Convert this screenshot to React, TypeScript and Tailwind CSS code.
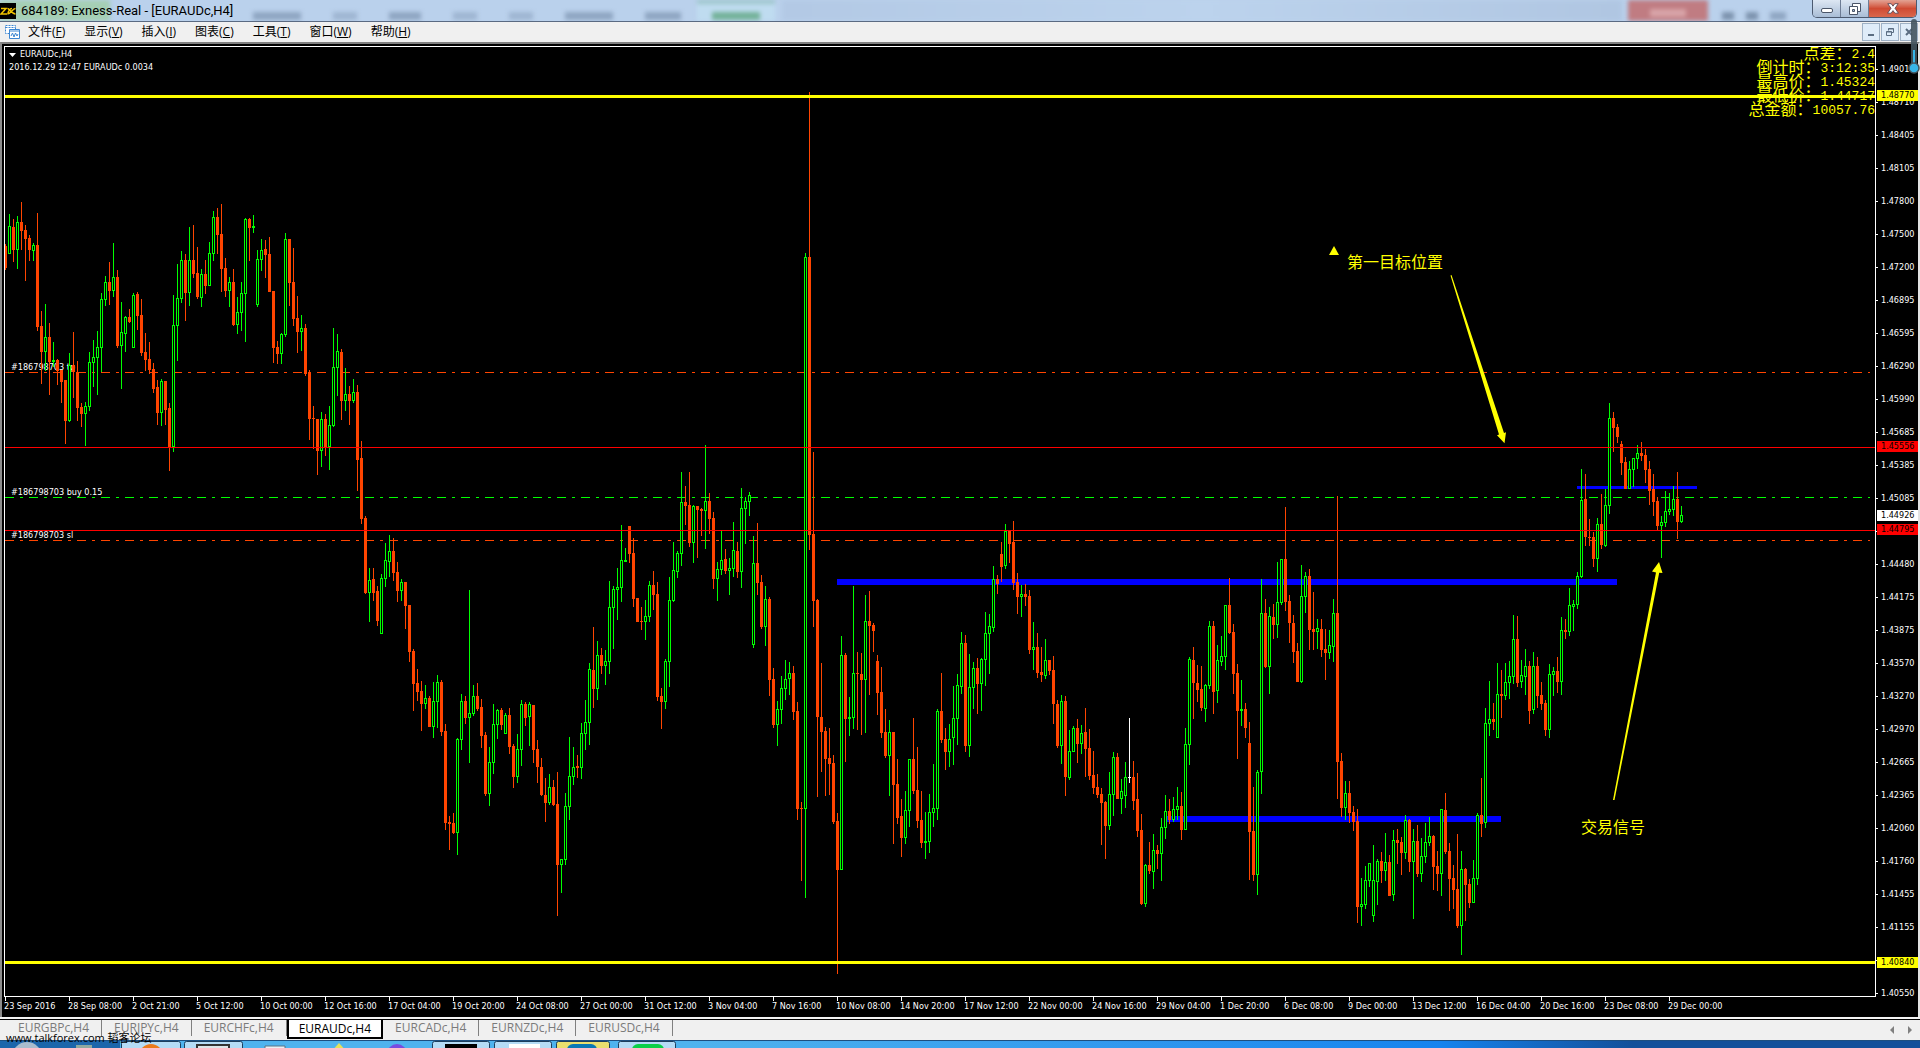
import React from 'react'
import clsx from 'clsx'

const BULL = '#00ff00'
const BEAR = '#ff4500'

// distance between two candles, and where the plot starts in the window
const STEP = 4
const PLOT_LEFT = 5
const PLOT_TOP = 47

// One candle per entry: direction (g up, r down, w flat), then high, body top, body bottom, low
const CANDLES = `
r244 246 268 270,g214 226 254 254,r219 227 250 262,g216 222 250 269,r202 222 231 250,r225 230 239 281,
r235 238 250 261,g243 245 251 261,r213 245 327 331,r311 326 352 384,g304 337 352 371,r323 337 362 395,
g342 360 362 367,r359 360 371 385,r370 370 382 403,r380 380 421 444,g353 365 421 422,r332 365 372 398,
r361 372 408 421,r403 407 414 427,g402 406 414 446,g352 362 407 411,g340 357 363 387,g331 347 358 395,
g293 299 348 372,g276 282 300 306,r262 282 291 305,g243 277 291 297,r270 277 346 348,g302 332 346 389,
g316 317 334 352,r309 317 322 323,g293 295 348 348,r292 294 316 330,r299 315 353 356,r333 352 360 371,
r342 359 370 374,r363 369 389 393,r380 387 413 425,g379 381 413 426,r381 381 410 425,r403 408 448 471,
g295 325 447 452,g264 298 326 361,g251 260 299 303,r254 260 293 321,g227 260 293 306,r225 260 274 278,
r247 273 297 299,g269 274 298 307,r260 274 286 294,g242 253 286 286,g211 217 254 261,r208 217 235 254,
r204 234 269 292,r258 268 291 297,g277 282 291 307,r269 282 325 326,g297 312 325 334,g282 293 313 331,
g218 219 294 342,r218 219 228 261,g215 226 228 233,g250 259 305 307,g239 250 260 271,r240 249 255 278,
r237 254 292 292,r291 291 348 363,r341 347 354 364,g333 334 354 364,g233 239 335 337,r239 239 283 306,
r248 282 319 326,r296 318 332 353,g315 328 332 351,r324 328 374 376,r370 372 419 440,r406 418 419 449,
r419 419 451 475,g412 419 451 467,r414 419 447 456,g406 425 447 470,g328 367 426 427,g334 351 368 396,
r349 352 401 420,g368 394 401 411,r386 394 401 425,g379 392 401 403,r385 392 460 491,r441 458 519 524,
r516 518 593 594,g568 580 593 622,r568 579 593 601,r586 591 621 626,g574 578 634 634,g543 560 579 587,
g535 551 562 577,r538 551 573 581,r562 572 591 602,g579 582 591 601,r582 582 606 629,r605 605 652 662,
r649 651 684 711,r669 683 692 701,r681 691 704 731,g685 698 704 709,r696 698 727 727,g682 701 727 738,
g675 682 702 728,r680 682 732 736,r724 731 823 830,r816 822 824 850,r813 823 833 834,g738 739 833 855,
g694 701 740 750,r696 701 718 724,g590 713 718 763,g685 696 714 716,r683 696 709 711,r699 707 736 748,
r732 735 794 796,g747 762 794 806,g704 724 763 774,g709 710 725 739,r708 710 725 730,g713 715 734 734,
r708 715 747 754,r744 746 777 788,g734 749 777 783,g700 704 750 766,r702 704 718 726,g702 704 717 746,
r705 705 750 763,r740 749 767 783,r758 767 795 796,r778 795 803 822,g774 787 803 805,r780 787 805 806,
r772 804 865 916,g859 859 865 893,g793 806 860 865,g737 776 807 820,g747 767 777 785,r755 766 768 778,
g723 733 768 779,g700 722 734 750,g663 669 723 745,r627 670 689 708,g641 655 689 700,r648 655 666 674,
g650 661 666 685,g581 607 662 674,g586 589 608 649,g568 587 590 620,g525 560 588 602,g548 560 562 562,
r526 526 554 563,r538 553 599 607,r598 598 622 622,r607 621 622 630,g600 616 622 640,g581 585 617 622,
r571 585 595 610,r582 594 697 701,r688 696 702 729,g659 661 702 709,g577 600 662 687,g542 570 601 602,
g551 553 572 578,g472 502 554 566,r486 502 506 525,r472 505 543 547,g505 506 543 563,r506 506 510 558,
r508 509 511 536,g445 501 511 549,r493 501 519 534,r512 518 579 589,g562 569 579 601,g531 560 570 575,
r549 559 571 574,g558 568 571 595,g522 550 569 577,r542 551 572 578,g488 508 572 588,g497 501 509 544,
g492 495 502 516,g536 563 645 648,r523 563 583 595,r575 582 627 629,g586 599 627 646,r597 599 680 696,
r668 679 725 728,g701 709 725 746,g676 688 710 724,g660 679 689 700,g662 673 679 695,r666 673 712 720,
r702 711 809 820,r802 808 809 881,g253 257 809 898,r92 257 535 550,r452 534 601 627,r599 600 717 797,
r663 717 732 772,r727 731 759 796,r728 758 764 795,r755 763 822 824,r813 821 870 974,g636 655 870 870,
r653 655 719 762,g697 717 719 736,g586 673 718 729,r652 673 674 730,r653 674 680 735,g595 621 680 733,
r591 621 626 695,r623 625 631 652,r655 661 693 715,r667 692 733 738,r709 732 756 758,g720 732 756 796,
r732 732 785 844,r759 784 818 824,r799 816 838 857,g791 810 838 844,g759 759 811 827,r718 759 791 794,
r747 790 821 828,r791 820 843 848,g812 841 843 859,g794 812 842 853,g764 808 813 827,g709 711 809 820,
r673 711 740 743,r728 739 752 770,g724 739 752 767,g686 718 738 765,g674 685 719 745,g632 643 687 694,
r635 643 746 752,g654 687 746 757,g662 668 688 709,r658 668 684 714,g658 659 684 711,g612 633 660 686,
g614 626 634 674,g566 579 628 632,r575 579 584 594,r542 554 567 582,g524 531 566 569,r531 531 544 563,
r521 542 583 590,r573 582 597 614,g585 594 597 617,r584 594 597 606,r590 596 650 654,g622 647 650 670,
r633 647 673 678,r647 672 675 682,g639 660 676 679,r660 660 671 675,r656 670 704 724,r700 704 746 748,
g695 701 746 764,r696 701 777 796,g730 751 778 780,g726 728 752 752,r719 728 744 763,g725 733 744 754,
r708 732 749 777,r729 748 776 780,r751 775 788 794,r774 787 795 798,r788 794 803 845,r801 802 826 859,
g772 794 826 830,g752 757 795 816,r753 757 799 799,g779 791 799 814,g762 777 796 808,w718 777 778 783,
r761 777 801 810,r773 799 831 837,r814 830 904 905,g864 865 904 907,r842 865 871 874,g834 850 872 889,
r845 850 854 869,g818 827 854 881,g795 811 828 839,r799 811 820 824,g797 809 820 822,g787 806 810 820,
r792 806 830 840,g728 744 830 830,g657 659 745 765,r647 660 683 719,r665 683 690 702,r666 689 708 711,
g684 685 709 722,g621 626 686 689,r621 626 692 714,g645 660 691 703,g636 656 662 666,g605 605 657 670,
r578 605 633 634,r624 632 674 694,r664 673 711 759,g680 709 711 726,r703 709 728 738,r722 743 832 880,
r787 831 875 881,g770 772 875 895,g579 613 772 794,r599 613 667 668,g607 616 667 694,r604 617 625 639,
g562 602 625 638,g559 559 603 605,r507 559 602 611,r595 601 623 643,r615 623 652 663,r643 651 682 682,
g565 596 682 683,g572 576 597 613,r569 576 630 650,r592 629 632 650,g619 628 632 649,r619 629 650 657,
r629 649 653 680,g630 645 653 659,g599 613 647 662,r496 613 762 799,r753 761 808 817,g781 793 808 820,
r781 793 813 823,r806 812 822 831,r809 821 907 923,g878 904 907 926,g866 880 905 909,g863 863 881 887,
g845 880 916 922,g859 861 882 905,r852 861 871 883,g833 862 871 881,r855 862 896 896,g830 840 895 901,
r829 840 843 864,r837 842 853 875,g815 820 853 859,r819 820 862 872,g829 841 862 919,r825 841 874 877,
g838 856 874 882,g823 842 857 863,g817 836 843 846,r835 836 867 890,r851 866 874 891,g809 809 874 896,
r793 810 852 854,r843 851 879 911,r865 878 890 909,r834 889 926 928,g851 869 926 955,r868 869 885 921,
r879 884 903 908,g860 878 903 903,g813 815 879 885,r778 815 824 837,g708 723 823 828,g681 719 724 736,
r703 719 722 730,g663 694 738 738,r670 694 696 718,g663 682 696 700,g661 676 683 699,g615 639 677 684,
r616 639 683 687,g660 675 682 688,g649 666 677 695,r661 666 711 724,g652 666 710 714,r657 666 696 708,
r682 695 704 710,r700 703 730 736,g664 674 730 738,g667 671 675 696,r657 671 682 693,g617 630 682 695,
r619 630 632 639,g588 605 632 636,g600 604 607 631,g572 576 605 609,g469 500 577 578,r474 499 537 546,
r519 537 538 546,r532 537 559 567,g518 524 559 572,r494 524 545 549,g489 505 546 547,g403 418 506 514,
r412 418 428 452,r424 427 437 443,r441 444 463 475,r457 462 489 489,g461 469 489 489,g458 458 470 487,
g445 453 459 469,r442 453 456 461,r449 455 470 483,r461 469 491 505,r474 489 502 516,r497 501 526 530,
g516 522 526 558,g491 511 523 527,g493 509 512 515,g486 499 510 516,r472 499 522 539,g506 515 522 523`
  .trim()
  .split(/,\s*/)
  .map((entry) => {
    const [high, top, bottom, low] = entry.slice(1).split(' ').map(Number)
    return { dir: entry[0], high, top, bottom, low }
  })

const MENU = [
  { label: '文件', hotkey: 'F' },
  { label: '显示', hotkey: 'V' },
  { label: '插入', hotkey: 'I' },
  { label: '图表', hotkey: 'C' },
  { label: '工具', hotkey: 'T' },
  { label: '窗口', hotkey: 'W' },
  { label: '帮助', hotkey: 'H' },
]

const INFO = [
  { label: '点差：', value: '2.4' },
  { label: '倒计时：', value: '3:12:35' },
  { label: '最高价：', value: '1.45324' },
  { label: '最低价：', value: '1.44717' },
  { label: '总金额：', value: '10057.76' },
]

// Empty strings are rows whose label sits under a price tag
const PRICES = [
  '1.49010', '1.48710', '1.48405', '1.48105', '1.47800', '1.47500', '1.47200', '1.46895',
  '1.46595', '1.46290', '1.45990', '1.45685', '1.45385', '1.45085', '', '1.44480',
  '1.44175', '1.43875', '1.43570', '1.43270', '1.42970', '1.42665', '1.42365', '1.42060',
  '1.41760', '1.41455', '1.41155', '', '1.40550',
]

const TAGS = [
  { price: '1.48770', y: 96, className: 'bg-[#ffff00] text-black' },
  { price: '1.45556', y: 447, className: 'bg-[#ff0000] text-black' },
  { price: '1.44926', y: 516, className: 'bg-white text-black' },
  { price: '1.44795', y: 530, className: 'bg-[#ff0000] text-black' },
  { price: '1.40840', y: 963, className: 'bg-[#ffff00] text-black' },
]

const TIMES = [
  '23 Sep 2016', '28 Sep 08:00', '2 Oct 21:00', '5 Oct 12:00', '10 Oct 00:00', '12 Oct 16:00',
  '17 Oct 04:00', '19 Oct 20:00', '24 Oct 08:00', '27 Oct 00:00', '31 Oct 12:00', '3 Nov 04:00',
  '7 Nov 16:00', '10 Nov 08:00', '14 Nov 20:00', '17 Nov 12:00', '22 Nov 00:00', '24 Nov 16:00',
  '29 Nov 04:00', '1 Dec 20:00', '6 Dec 08:00', '9 Dec 00:00', '13 Dec 12:00', '16 Dec 04:00',
  '20 Dec 16:00', '23 Dec 08:00', '29 Dec 00:00',
]

const TABS = ['EURGBPc,H4', 'EURJPYc,H4', 'EURCHFc,H4', 'EURAUDc,H4', 'EURCADc,H4', 'EURNZDc,H4', 'EURUSDc,H4']
const ACTIVE_TAB = 'EURAUDc,H4'

function Candles() {
  return (
    <g shapeRendering="crispEdges">
      {CANDLES.map(({ dir, high, top, bottom, low }, i) => {
        const x = PLOT_LEFT + i * STEP
        const color = dir === 'g' ? BULL : dir === 'r' ? BEAR : '#ffffff'
        const height = Math.max(bottom - top, 1)
        return (
          <g key={i} fill={color}>
            <rect x={x} y={high} width={1} height={Math.max(low - high, 1)} />
            <rect x={x - 1} y={top} width={3} height={height} />
            {dir === 'g' && height > 2 && (
              <rect x={x} y={top + 1} width={1} height={height - 2} fill="#000000" />
            )}
          </g>
        )
      })}
    </g>
  )
}

function Plot() {
  return (
    <svg className="block h-full w-full" role="img" aria-label="EURAUDc,H4">
      <g transform={`translate(${-PLOT_LEFT} ${-PLOT_TOP})`}>
        {/* support and resistance zones */}
        <g fill="#0000ff" shapeRendering="crispEdges">
          <rect x={837} y={579} width={780} height={6} />
          <rect x={1167} y={816} width={334} height={6} />
          <rect x={1577} y={486} width={120} height={3} />
        </g>

        {/* order levels */}
        <g strokeWidth={1} strokeDasharray="9 6 3 6" shapeRendering="crispEdges">
          <line x1={5} x2="100%" y1={372.5} y2={372.5} stroke={BEAR} />
          <line x1={5} x2="100%" y1={497.5} y2={497.5} stroke={BULL} />
          <line x1={5} x2="100%" y1={540.5} y2={540.5} stroke={BEAR} />
        </g>

        <g fill="#ffffff" className="font-['DejaVu_Sans_Condensed','DejaVu_Sans',sans-serif] text-[9px]">
          <text x={11} y={370}>#186798703 tp</text>
          <text x={11} y={495}>#186798703 buy 0.15</text>
          <text x={11} y={538}>#186798703 sl</text>
        </g>

        <Candles />

        <g fill="#ff0000" shapeRendering="crispEdges">
          <rect x={5} y={447} width="100%" height={1} />
          <rect x={5} y={530} width="100%" height={1} />
        </g>
        <g fill="#ffff00" shapeRendering="crispEdges">
          <rect x={5} y={95} width="100%" height={3} />
          <rect x={5} y={961} width="100%" height={3} />
        </g>

        {/* notes */}
        <g fill="#ffff00">
          <path d="M1334 246l5 9h-10z" />
          <path d="M1450.500 275.500L1499 434.500l-2 .8 7.500 8 1.500-11-2 .6L1451.500 275z" />
          <path d="M1613 800L1656 572.500l-4-1 7-9.500 3.500 11-3.300-.3L1614.500 800z" />
        </g>
        <g fill="#ffff00" className="font-['Noto_Sans_CJK_SC',sans-serif] text-base">
          <text x={1347} y={268}>第一目标位置</text>
          <text x={1581} y={833}>交易信号</text>
        </g>
      </g>
    </svg>
  )
}

function TitleBar() {
  return (
    <header className="relative flex h-[22px] shrink-0 items-center overflow-hidden border-b border-[#5a6a82] bg-[#bad1ec]">
      {/* windows that shine through the glass */}
      <div className="absolute inset-0 flex justify-between blur-[2px]" aria-hidden="true">
        <div className="h-full w-[110px] bg-[#a5cfb4]" />
        <div className="flex w-[575px] items-end gap-8 pb-[1px] pl-[137px]">
          <span className="h-2 w-12 bg-[#8fa6c2]" />
          <span className="h-2 w-6 bg-[#9fb6d2]" />
          <span className="h-2 w-8 bg-[#8fa6c2]" />
          <span className="h-2 w-6 bg-[#9fb6d2]" />
          <span className="h-2 w-6 bg-[#9fb6d2]" />
          <span className="h-2 w-12 bg-[#8fa6c2]" />
          <span className="h-2 w-9 bg-[#8fa6c2]" />
        </div>
        <div className="flex h-full w-[78px] items-end justify-center border-t-4 border-[#9cc5c9] bg-[#bfdcf0] pb-[1px]">
          <span className="h-2 w-12 bg-[#74b29a]" />
        </div>
        <div className="h-full w-[840px] bg-linear-to-r from-[#b3c9e5] via-[#bcd3ed] to-[#b0c6e2]" />
        <div className="flex h-full w-20 items-end justify-center bg-[#c07c82] pb-1">
          <span className="h-2 w-9 bg-[#d8a4a8]" />
        </div>
        <div className="flex w-[206px] items-end gap-3 pb-[1px] pl-2">
          <span className="h-2 w-3 bg-[#7d93ae]" />
          <span className="h-2 w-3 bg-[#7d93ae]" />
          <span className="h-2 w-4 bg-[#8fa6c2]" />
        </div>
      </div>

      <svg className="relative h-4 w-4 bg-black" viewBox="0 0 16 16" fill="none" stroke="#f2c500" strokeWidth="1.500" aria-hidden="true">
        <path d="M1 5.500h5L1 11h6M8 11c0-3 2-5.500 4-5.500M7.500 5.500c2 0 4 5.500 8 5.500M15.500 5.500c-3 0-4.500 5.500-8 5.500" />
      </svg>
      <h1 className="relative pl-[5px] font-[Roboto,sans-serif] text-[13px] text-black">684189: Exness-Real - [EURAUDc,H4]</h1>

      <div className="relative mr-[3px] ml-auto flex h-[18px] self-start overflow-hidden rounded-b-[5px] border border-t-0 border-[#4c5a70]">
        <button type="button" aria-label="Minimize" className="flex w-7 items-center justify-center border-r border-[#6d7c94] bg-linear-to-b from-[#dde7f3] to-[#a9bdd6]">
          <span className="mt-1 h-[5px] w-3 rounded-xs border border-[#4a5568] bg-white" />
        </button>
        <button type="button" aria-label="Restore" className="flex w-7 items-center justify-center border-r border-[#6d7c94] bg-linear-to-b from-[#dde7f3] to-[#a9bdd6]">
          <svg className="h-3 w-3" viewBox="0 0 12 12" fill="#ffffff" stroke="#4a5568" aria-hidden="true">
            <path d="M3.500.5h8v8h-8z" />
            <path d="M.5 3.500h8v8h-8z" />
            <path d="M3.500 6.500h2v2h-2z" fill="#a9bdd6" />
          </svg>
        </button>
        <button type="button" aria-label="Close" className="flex w-[47px] items-center justify-center bg-linear-to-b from-[#e2a294] via-[#cf4a33] to-[#d9674c]">
          <svg className="h-[11px] w-3" viewBox="0 0 12 11" fill="#ffffff" stroke="#4a4050" strokeWidth="0.8" aria-hidden="true">
            <path d="M.8.7h3.400L6 3.200 7.800.7h3.400L8 5.300l3.400 4.900H7.900L6 7.600l-1.900 2.600H.6L4 5.300z" />
          </svg>
        </button>
      </div>
    </header>
  )
}

function MenuBar() {
  return (
    <nav className="flex h-5 shrink-0 items-center bg-[#f0f0f0] pl-[5px] text-xs text-black">
      <svg className="h-4 w-4" viewBox="0 0 16 16" fill="#ffffff" stroke="#3c86d2" aria-hidden="true">
        <path d="M.5 1.500h10v8H.5zM.5 3.500h10" strokeDasharray="2 1" />
        <path d="M4.500 5.500h10v9h-10z" />
        <path d="M4.500 7h10" />
        <path d="M6 12l1.500-3L9 13l1.500-4L12 12l1-2" fill="none" />
      </svg>
      <ul className="flex gap-[19px] pl-[7px]">
        {MENU.map((item) => (
          <li key={item.hotkey}>
            <button type="button" className="leading-5">
              {item.label}(<u>{item.hotkey}</u>)
            </button>
          </li>
        ))}
      </ul>
      <div className="mr-[2px] ml-auto flex gap-[1px]">
        <button type="button" aria-label="Minimize chart" className="flex h-[18px] w-[18px] items-end justify-center border border-[#9fb1c5] bg-[#dfecf9] pb-1">
          <span className="h-[2px] w-[6px] bg-[#5b6d82]" />
        </button>
        <button type="button" aria-label="Restore chart" className="flex h-[18px] w-[18px] items-center justify-center border border-[#9fb1c5] bg-[#dfecf9]">
          <svg className="h-2 w-2" viewBox="0 0 8 8" fill="none" stroke="#5b6d82" aria-hidden="true">
            <path d="M2.500 2.500V.5h5v4h-2M2.500 1h5M.5 3.500h5v4h-5zM.5 4h5" />
          </svg>
        </button>
        <button type="button" aria-label="Close chart" className="flex h-[18px] w-[18px] items-center justify-center border border-[#9fb1c5] bg-[#dfecf9]">
          <svg className="h-2 w-2" viewBox="0 0 8 8" stroke="#5b6d82" strokeWidth="2" aria-hidden="true">
            <path d="M1 1l6 6M7 1L1 7" />
          </svg>
        </button>
      </div>
    </nav>
  )
}

function Chart() {
  return (
    <main className="flex min-h-0 flex-1 flex-col border-t-2 border-r-2 border-l-2 border-t-[#808080] border-r-[#e3e3e3] border-l-[#8c8c8c] bg-black pt-[2px] pl-[2px] font-['DejaVu_Sans_Condensed','DejaVu_Sans',sans-serif] text-[9px] text-white">
      <div className="flex min-h-0 flex-1">
        <div className="relative min-w-0 flex-1 overflow-hidden border border-white">
          <Plot />
          <div className="absolute top-0 left-1 pt-[1px] leading-[13px]">
            <p className="flex items-center gap-1">
              <svg className="h-1 w-[7px]" viewBox="0 0 7 4" fill="#ffffff" aria-hidden="true">
                <path d="M0 0h7L3.500 4z" />
              </svg>
              EURAUDc,H4
            </p>
            <p>2016.12.29 12:47 EURAUDc 0.0034</p>
          </div>
          <dl className="absolute top-0 right-0 pt-[1px] font-['Liberation_Mono','Noto_Sans_CJK_SC',monospace] text-[13px] leading-[14px] text-[#ffff00]">
            {INFO.map((row) => (
              <div key={row.label} className="flex h-[14px] items-center justify-end">
                <dt className="text-base leading-[14px]">{row.label}</dt>
                <dd>{row.value}</dd>
              </div>
            ))}
          </dl>
        </div>

        <aside className="relative w-[42px] shrink-0 overflow-hidden pt-[7px]">
          {PRICES.map((price, i) => (
            <div key={i} className="flex h-[33px] items-center">
              <span className="mr-[3px] h-[1px] w-[2px] bg-white" />
              {price}
            </div>
          ))}
          {TAGS.map((tag) => (
            <span
              key={tag.price}
              className={clsx('absolute right-0 left-[1px] h-[11px] pl-1 leading-[11px]', tag.className)}
              style={{ top: tag.y - 6 - (PLOT_TOP - 1) }}
            >
              {tag.price}
            </span>
          ))}
        </aside>
      </div>

      <ol className="flex h-5 shrink-0">
        {TIMES.map((time) => (
          <li key={time} className="w-16 whitespace-nowrap">
            <span className="ml-[1px] block h-1 w-[1px] bg-white" />
            <time className="block leading-[11px]">{time}</time>
          </li>
        ))}
      </ol>
    </main>
  )
}

function ChartTabs() {
  return (
    <footer className="relative flex h-[23px] shrink-0 items-start border-t-2 border-[#f4f4f4] bg-[#f0f0f0]">
      <ul className="flex h-5 flex-1 border-t border-black pl-[6px]">
        {TABS.map((tab) => (
          <li key={tab} className="flex">
            <button
              type="button"
              className={clsx(
                'text-xs',
                tab === ACTIVE_TAB
                  ? 'border-x-2 border-b-2 border-black bg-white px-[10px] leading-[17px] text-black'
                  : 'mb-[3px] border-r border-[#808080] px-3 leading-4 text-[#7b7b7b]'
              )}
            >
              {tab}
            </button>
          </li>
        ))}
        <li className="mr-2 ml-auto flex items-center gap-[14px]">
          <button type="button" aria-label="Scroll tabs left" className="h-2 w-1 text-[#808080]">
            <svg className="h-2 w-1" viewBox="0 0 4 8" fill="currentColor"><path d="M4 0v8L0 4z" /></svg>
          </button>
          <button type="button" aria-label="Scroll tabs right" className="h-2 w-1 text-[#808080]">
            <svg className="h-2 w-1" viewBox="0 0 4 8" fill="currentColor"><path d="M0 0v8l4-4z" /></svg>
          </button>
        </li>
      </ul>
      <p className="absolute top-[12px] left-[6px] z-10 text-[11px] leading-[14px] whitespace-nowrap text-black">
        www.talkforex.com 韬客论坛
      </p>
    </footer>
  )
}

function TaskBar() {
  return (
    <div className="h-2 shrink-0 overflow-hidden border-t border-[#1d4f80] bg-linear-to-r from-[#4fb3ee] from-36% via-[#1583ee] via-75% to-[#12509a] to-85%" aria-hidden="true">
      <svg className="h-7 w-full" fill="none">
        <rect x="0" width="120" height="28" fill="#1c66ab" />
        <circle cx="27" cy="16" r="15" fill="#a9bccd" />
        <path d="M76 4h16v20H76z" fill="#8fa9a0" />
        <g fill="#b5dcf6" stroke="#1d3f5e">
          <rect x="121.500" y=".5" width="59" height="30" rx="2" />
          <rect x="184.500" y=".5" width="58" height="30" rx="2" />
          <rect x="432.500" y=".5" width="57" height="30" rx="2" />
          <rect x="494.500" y=".5" width="57" height="30" rx="2" />
          <rect x="556.500" y=".5" width="53" height="30" rx="2" fill="#eadf6e" />
          <rect x="618.500" y=".5" width="57" height="30" rx="2" />
        </g>
        <circle cx="151" cy="15" r="12" fill="#ea7a1c" />
        <path d="M197 4h32v20h-32z" fill="#dde5e8" stroke="#333333" strokeWidth="2" />
        <path d="M265 5h20v16h-20z" fill="#e8f0f4" stroke="#5b7285" />
        <path d="M339 2l8 9h-16z" fill="#e6e15a" />
        <circle cx="397" cy="13" r="10" fill="#7a4be0" />
        <path d="M445 3h32v20h-32z" fill="#000000" />
        <path d="M509 3h31v20h-31z" fill="#ffffff" />
        <rect x="567" y="3" width="30" height="26" rx="6" fill="#0a78b5" />
        <rect x="632" y="3" width="32" height="26" rx="6" fill="#0ad048" />
      </svg>
    </div>
  )
}

export default function App() {
  return (
    <div className="relative flex h-screen flex-col overflow-hidden bg-[#f0f0f0] font-['Open_Sans','Noto_Sans_CJK_SC',sans-serif]">
      <TitleBar />
      <MenuBar />
      <Chart />
      <ChartTabs />
      <TaskBar />

      {/* temperature gadget that floats over the corner */}
      <svg className="absolute top-[18px] right-0 h-14 w-3" viewBox="0 0 12 56" aria-hidden="true">
        <rect x="3" y="1" width="6" height="50" rx="3" fill="#44545e" fillOpacity="0.9" />
        <rect x="5" y="32" width="2" height="18" fill="#37b6ea" />
        <circle cx="6" cy="50" r="5" fill="#37b6ea" stroke="#44545e" strokeWidth="1.500" />
      </svg>
    </div>
  )
}
